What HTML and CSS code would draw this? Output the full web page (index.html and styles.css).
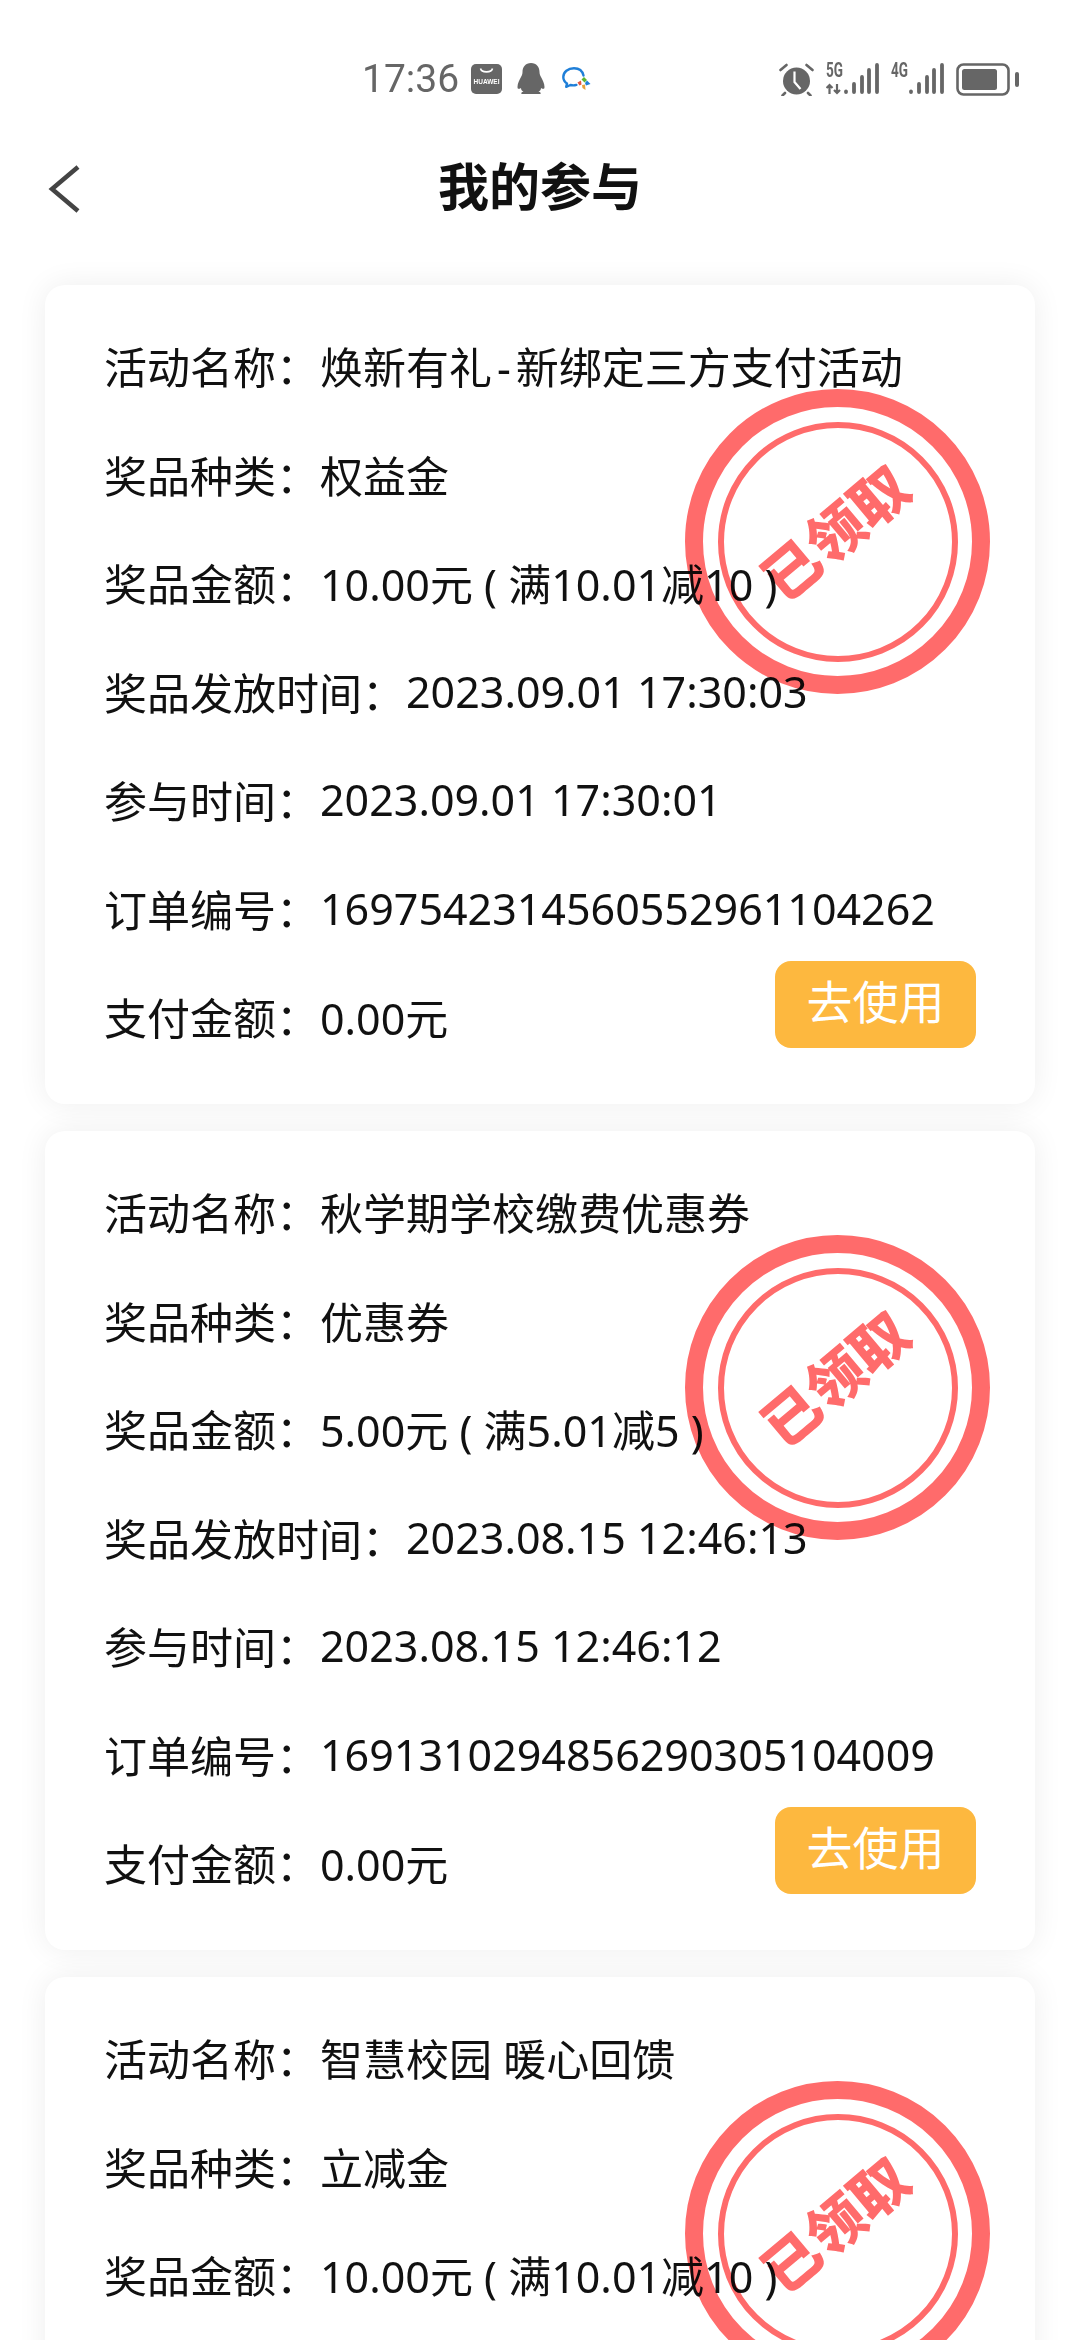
FILE: index.html
```html
<!DOCTYPE html>
<html lang="zh-CN">
<head>
    <meta charset="UTF-8">
    <meta name="viewport" content="width=device-width, initial-scale=1.0">
    <title>我的参与</title>
    <link rel="stylesheet" href="styles.css">
</head>
<body>
<div class="status-bar">
    <span class="time">17:36</span>
    <svg class="ic-huawei" viewBox="0 0 31 30">
        <rect width="31" height="30" rx="5" fill="#666"/>
        <path d="M9.500 4.500c1 4.500 11 4.500 12 0" fill="none" stroke="#fff" stroke-width="1.600"/>
        <text x="15.500" y="20" text-anchor="middle" class="hw-text">HUAWEI</text>
    </svg>
    <svg class="ic-qq" viewBox="0 0 30 32">
        <path d="M15 0c-5.500 0-8.500 4-8.500 9 0 2-.5 3-1.500 5-1.500 2.500-3.500 6.500-3.500 10 0 2 1 2.500 3.500 1-.2 1.500 1 3 2.500 3.500-2 .5-2.500 1.500-2 2.500h19c.5-1 0-2-2-2.500 1.500-.5 2.700-2 2.500-3.500 2.500 1.500 3.500 1 3.500-1 0-3.500-2-7.500-3.500-10-1-2-1.500-3-1.500-5 0-5-3-9-8.500-9z" fill="#666"/>
    </svg>
    <svg class="ic-wecom" viewBox="0 0 29 24">
        <path d="M21.500 8.500C20.500 4 17 1.200 12 1.200 6 1.200 1.300 5 1.300 10c0 2.800 1.400 5 3.700 6.500l-.8 3.300 4.200-1.800c2 .5 4.300.5 6-.1" fill="none" stroke="#1f7fd8" stroke-width="2.400" stroke-linecap="round" stroke-linejoin="round"/>
        <path d="M22 10l3 3-2.500 2.500-3-3z" fill="#5cb531"/>
        <path d="M25 13.500l3.500 3.500-4.500 1.500-1-2.500z" fill="#1f7fd8"/>
        <path d="M20 18l3-.5.500 5.500-3-2z" fill="#e8a13a"/>
        <path d="M15.500 15.500l3.500-2 .5 4-2 1z" fill="#e2583e"/>
    </svg>

    <div class="status-right">
        <svg class="ic-alarm" viewBox="0 0 35 34">
            <circle cx="17.500" cy="19" r="13.500" fill="#666"/>
            <path d="M15.500 9.500v10.500l6 7" fill="none" stroke="#fff" stroke-width="2.200"/>
            <path d="M1.500 8l6-5M33.500 8l-6-5M6 31l-2.500 2.500M29 31l2.500 2.500" stroke="#666" stroke-width="2.600" stroke-linecap="round"/>
        </svg>
        <svg class="ic-signal" viewBox="0 -8 53 42">
            <text x="0" y="15" class="net-text" textLength="17" lengthAdjust="spacingAndGlyphs">5G</text>
            <path d="M3.500 32v-9M.5 26l3-3 3 3M11 22v9M8 28l3 3 3-3" fill="none" stroke="#666" stroke-width="2.200"/>
            <path class="bars" d="M20 30v-.5M28 30v-8M36 30v-15M43 30v-22M51 30v-27"/>
        </svg>
        <svg class="ic-signal" viewBox="0 -8 53 42">
            <text x="0" y="15" class="net-text" textLength="17" lengthAdjust="spacingAndGlyphs">4G</text>
            <path class="bars" d="M20 30v-.5M28 30v-8M36 30v-15M43 30v-22M51 30v-27"/>
        </svg>
        <svg class="ic-battery" viewBox="0 0 63 33">
            <rect x="1.500" y="1.500" width="51" height="30" rx="6" fill="none" stroke="#666" stroke-width="2.600"/>
            <rect x="6" y="6" width="35" height="21" rx="2.500" fill="#666"/>
            <rect x="59" y="9" width="4" height="15" rx="2" fill="#666"/>
        </svg>
    </div>
</div>

<div class="nav">
    <svg class="back" viewBox="0 0 32 48">
        <path d="M30 2L4 24l26 22" fill="none" stroke="#444" stroke-width="4.500"/>
    </svg>
    <h1 class="title">我的参与</h1>
</div>

<div class="list">
    <div class="card">
        <div class="stamp"><div class="stamp-inner"><span class="stamp-text">已领取</span></div></div>
        <div class="row">活动名称：<span class="val">焕新有礼<span class="dash">-</span>新绑定三方支付活动</span></div>
        <div class="row">奖品种类：<span class="val">权益金</span></div>
        <div class="row">奖品金额：<span class="val">10.00元 ( 满10.01减10 )</span></div>
        <div class="row">奖品发放时间：<span class="val">2023.09.01 17:30:03</span></div>
        <div class="row">参与时间：<span class="val">2023.09.01 17:30:01</span></div>
        <div class="row">订单编号：<span class="val">1697542314560552961104262</span></div>
        <div class="row">支付金额：<span class="val">0.00元</span></div>
        <div class="use-btn">去使用</div>
    </div>

    <div class="card">
        <div class="stamp"><div class="stamp-inner"><span class="stamp-text">已领取</span></div></div>
        <div class="row">活动名称：<span class="val">秋学期学校缴费优惠券</span></div>
        <div class="row">奖品种类：<span class="val">优惠券</span></div>
        <div class="row">奖品金额：<span class="val">5.00元 ( 满5.01减5 )</span></div>
        <div class="row">奖品发放时间：<span class="val">2023.08.15 12:46:13</span></div>
        <div class="row">参与时间：<span class="val">2023.08.15 12:46:12</span></div>
        <div class="row">订单编号：<span class="val">1691310294856290305104009</span></div>
        <div class="row">支付金额：<span class="val">0.00元</span></div>
        <div class="use-btn">去使用</div>
    </div>

    <div class="card">
        <div class="stamp"><div class="stamp-inner"><span class="stamp-text">已领取</span></div></div>
        <div class="row">活动名称：<span class="val">智慧校园 暖心回馈</span></div>
        <div class="row">奖品种类：<span class="val">立减金</span></div>
        <div class="row">奖品金额：<span class="val">10.00元 ( 满10.01减10 )</span></div>
    </div>
</div>
</body>
</html>
```

FILE: styles.css
```css
html, body{
    margin: 0;
    height: 2340px;
    overflow: hidden;
    background: #fff;
}
body{
    font-family: "Noto Sans", "Noto Sans CJK SC", sans-serif;
    color: #111;
}

/* status bar */
.status-bar{
    display: flex;
    align-items: center;
    height: 34px;
    padding: 62px 61px 0 362px;
    color: #666;
}
.time{
    font-family: Roboto, sans-serif;
    font-size: 39px;
    width: 109px;
}
.ic-huawei{ width: 31px; height: 30px; }
.ic-qq{ width: 30px; height: 32px; margin-left: 14px; }
.ic-wecom{ width: 29px; height: 24px; margin-left: 16px; }
.hw-text{
    font-family: "Liberation Sans", sans-serif;
    font-size: 6.500px;
    font-weight: 700;
    fill: #fff;
}
.net-text{
    font-family: Roboto, sans-serif;
    font-size: 20px;
    font-weight: 700;
    fill: #666;
}
.bars{
    fill: none;
    stroke: #666;
    stroke-width: 3.800;
    stroke-linecap: round;
}
.status-right{
    display: flex;
    align-items: center;
    gap: 12px;
    margin-left: auto;
}
.ic-alarm{ width: 35px; height: 34px; }
.ic-signal{ width: 53px; height: 42px; margin-top: -8px; }
.ic-battery{ width: 63px; height: 33px; }

/* header */
.nav{
    display: flex;
    align-items: center;
    justify-content: center;
    position: relative;
    height: 108px;
    padding-bottom: 12px;
    margin-top: 34px;
}
.back{
    position: absolute;
    left: 48px;
    top: 35px;
    width: 32px;
    height: 48px;
}
.title{
    margin: 0;
    font-size: 51px;
    font-weight: 700;
    color: #111;
}

/* cards */
.list{
    display: flex;
    flex-direction: column;
    gap: 27px;
    padding: 35px 45px 0;
}
.card{
    position: relative;
    box-sizing: border-box;
    height: 819px;
    flex-shrink: 0;
    padding: 26.500px 0 0 59px;
    background: #fff;
    border-radius: 20px;
    box-shadow: 0 0 30px rgba(0,0,0,.07);
}
.row{
    display: flex;
    align-items: center;
    height: 108.500px;
    font-size: 43px;
    white-space: pre;
}
.val{
    margin-left: 1px;
}
.dash{
    margin: 0 5px;
}
.stamp{
    position: absolute;
    right: 45px;
    top: 104px;
    box-sizing: border-box;
    display: flex;
    align-items: center;
    justify-content: center;
    width: 305px;
    height: 305px;
    border: 18px solid #ff6b6b;
    border-radius: 50%;
    mix-blend-mode: multiply;
}
.stamp-inner{
    box-sizing: border-box;
    display: flex;
    align-items: center;
    justify-content: center;
    width: 240px;
    height: 240px;
    border: 6px solid #ff6b6b;
    border-radius: 50%;
}
.stamp-text{
    font-family: "Noto Sans CJK SC", sans-serif;
    font-size: 57px;
    font-weight: 900;
    line-height: 1;
    color: #ff6b6b;
    white-space: nowrap;
    transform: translate(-4px, -11px) rotate(-40deg);
}
.use-btn{
    position: absolute;
    right: 59px;
    bottom: 56px;
    display: flex;
    align-items: center;
    justify-content: center;
    box-sizing: border-box;
    width: 201px;
    height: 87px;
    padding-bottom: 12px;
    border-radius: 16px;
    background: #fdb83f;
    color: #fff;
    font-size: 46px;
}
```
